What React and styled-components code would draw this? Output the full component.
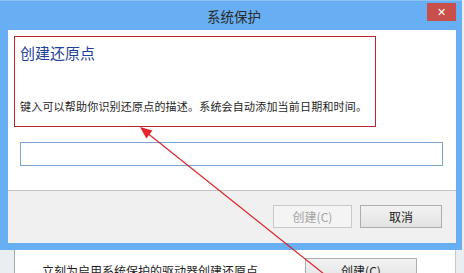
import React from "react";
import styled, { createGlobalStyle } from "styled-components";

const GlobalStyle = createGlobalStyle`
  html, body {
    margin: 0;
    padding: 0;
    background: #e9eef3;
  }
  body {
    font-family: "Noto Sans CJK SC", "Noto Sans", sans-serif;
  }
`;

const Screen = styled.div`
  position: relative;
  width: 464px;
  height: 273px;
  overflow: hidden;
  display: flex;
  flex-direction: column;
  background: #e9eef3;
`;

const Dialog = styled.div`
  position: relative;
  width: 462px;
  height: 250px;
  box-sizing: border-box;
  background: #67aef2;
  border-top: 1px solid #8cc2f6;
  padding: 0 6px 7px 8px;
  display: flex;
  flex-direction: column;
  flex-shrink: 0;
`;

const TitleBar = styled.div`
  height: 29px;
  display: flex;
  align-items: center;
  justify-content: center;
  font-size: 13.5px;
  color: #2b2b2b;
  padding-left: 4px;
`;

const CloseButton = styled.div`
  position: absolute;
  top: 2px;
  right: 6px;
  width: 29px;
  height: 18px;
  background: #c9504a;
  color: #fff;
  display: flex;
  align-items: center;
  justify-content: center;
  font-family: "DejaVu Sans", sans-serif;
  font-size: 11px;
  font-weight: bold;
`;

const Content = styled.div`
  background: #fff;
  height: 160px;
  box-sizing: border-box;
  padding: 6px 0 0 6px;
  display: flex;
  flex-direction: column;
`;

const NoteBox = styled.div`
  width: 362px;
  height: 91px;
  box-sizing: border-box;
  border: 1px solid #b8262d;
  padding: 5px 0 0 5px;
  display: flex;
  flex-direction: column;
`;

const Heading = styled.div`
  font-size: 15px;
  line-height: 22px;
  color: #1f3f9c;
`;

const Description = styled.div`
  margin-top: 33px;
  font-size: 11px;
  letter-spacing: 0.2px;
  line-height: 18px;
  color: #1e1e1e;
  white-space: nowrap;
`;

const Input = styled.div`
  margin: 15px 0 0 6px;
  width: 423px;
  height: 24px;
  box-sizing: border-box;
  border: 1px solid #7ea6d3;
  background: #fff;
`;

const Footer = styled.div`
  height: 53px;
  box-sizing: border-box;
  border-top: 1px solid #c4c4c4;
  background: #f0f0f0;
  display: flex;
  justify-content: flex-end;
  align-items: flex-start;
  gap: 8px;
  padding: 14px 14px 0 0;
`;

const Button = styled.div`
  width: ${(p) => p.$w || 80}px;
  height: 23px;
  box-sizing: border-box;
  border: 1px solid ${(p) => (p.$disabled ? "#c9c9c9" : "#adadad")};
  background: ${(p) =>
    p.$disabled ? "#f4f4f4" : "linear-gradient(#f2f2f2, #e3e3e3)"};
  color: ${(p) => (p.$disabled ? "#a3a3a3" : "#1a1a1a")};
  font-size: 12px;
  display: flex;
  align-items: center;
  justify-content: center;
`;

const Behind = styled.div`
  flex: 1;
  display: flex;
  padding-left: 14px;
  padding-right: 8px;
`;

const BehindPanel = styled.div`
  flex: 1;
  background: #fff;
  border-left: 1px solid #a9a9a9;
  border-right: 1px solid #c8c8c8;
  display: flex;
  align-items: flex-start;
  padding: 10px 0 0 27px;
  font-size: 12px;
  color: #1e1e1e;
`;

const BehindText = styled.div`
  width: 263px;
  line-height: 18px;
  padding-top: 2px;
`;

const BehindButton = styled.div`
  width: 112px;
  height: 24px;
  box-sizing: border-box;
  margin-top: -2px;
  border: 1px solid #adadad;
  background: linear-gradient(#f2f2f2, #e3e3e3);
  display: flex;
  justify-content: center;
  padding-top: 3px;
  font-size: 12px;
`;

const Overlay = styled.svg`
  position: absolute;
  left: 0;
  top: 0;
  pointer-events: none;
`;

export default function App() {
  return (
    <Screen>
      <GlobalStyle />
      <Dialog>
        <TitleBar>系统保护</TitleBar>
        <CloseButton>✕</CloseButton>
        <Content>
          <NoteBox>
            <Heading>创建还原点</Heading>
            <Description>
              键入可以帮助你识别还原点的描述。系统会自动添加当前日期和时间。
            </Description>
          </NoteBox>
          <Input />
        </Content>
        <Footer>
          <Button $disabled $w={79}>创建(C)</Button>
          <Button $w={82}>取消</Button>
        </Footer>
      </Dialog>
      <Behind>
        <BehindPanel>
          <BehindText>立刻为启用系统保护的驱动器创建还原点。</BehindText>
          <BehindButton>创建(C)</BehindButton>
        </BehindPanel>
      </Behind>
      <Overlay width="464" height="273" viewBox="0 0 464 273">
        <line x1="324" y1="274" x2="146" y2="132" stroke="#d9262c" strokeWidth="1.2" />
        <polygon points="140,127 146.3,138.4 152.5,130.6" fill="#e3262c" />
      </Overlay>
    </Screen>
  );
}
